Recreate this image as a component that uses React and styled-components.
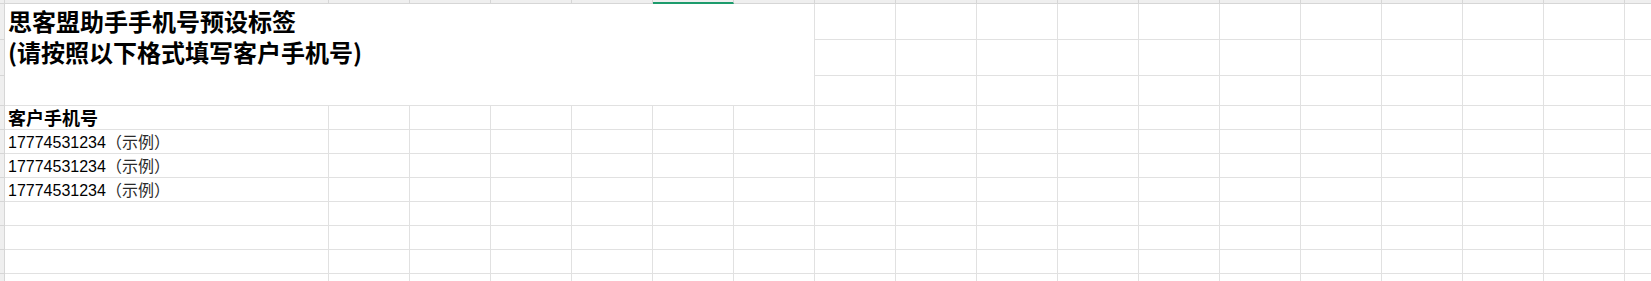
import React from "react";
import styled, { createGlobalStyle } from "styled-components";

const GlobalStyle = createGlobalStyle`
  html, body {
    margin: 0;
    padding: 0;
    background: #ffffff;
    overflow: hidden;
  }
  body {
    font-family: "Liberation Sans", "Noto Sans CJK SC", sans-serif;
  }
`;

const COL_A = 324;
const COL_W = 81;
const EXTRA_COLS = 17;
const ROW_HEIGHTS = [36, 36, 30, 24, 24, 24, 24, 24, 24, 24, 24];
const SELECTED_COL = 5; // column F

const Sheet = styled.div`
  width: 1651px;
  height: 281px;
  overflow: hidden;
  display: grid;
  grid-template-columns: 5px ${COL_A}px repeat(${EXTRA_COLS}, ${COL_W}px);
  grid-template-rows: 4px ${ROW_HEIGHTS.map((h) => `${h}px`).join(" ")};
  background: #ffffff;
`;

const Corner = styled.div`
  box-sizing: border-box;
  background: #efefef;
  border-right: 1px solid #d6d6d6;
  border-bottom: 1px solid #d6d6d6;
`;

const ColHeader = styled.div`
  box-sizing: border-box;
  background: #efefef;
  border-right: 1px solid #d6d6d6;
  border-bottom: ${(p) => (p.$selected ? "2px solid #1d9b6c" : "1px solid #d6d6d6")};
`;

const RowHeader = styled.div`
  box-sizing: border-box;
  background: #efefef;
  border-right: 1px solid #d6d6d6;
  border-bottom: 1px solid #d6d6d6;
`;

const Cell = styled.div`
  box-sizing: border-box;
  border-right: 1px solid #e1e1e1;
  border-bottom: 1px solid #e1e1e1;
  padding: 0 3px;
  white-space: nowrap;
  overflow: visible;
  font-size: 16px;
  line-height: ${(p) => p.$line || 23}px;
  color: #000000;
  font-weight: ${(p) => (p.$bold ? 700 : 400)};
  font-family: ${(p) =>
    p.$bold
      ? `"Noto Sans CJK SC", sans-serif`
      : `"Liberation Sans", "Noto Sans CJK SC", sans-serif`};
  ${(p) => (p.$size ? `font-size: ${p.$size}px;` : "")}
`;

const MergedTitle = styled.div`
  box-sizing: border-box;
  grid-column: 2 / 9;
  grid-row: 2 / 5;
  border-right: 1px solid #e1e1e1;
  border-bottom: 1px solid #e1e1e1;
  padding: 1px 3px 0;
  font-family: "Noto Sans CJK SC", sans-serif;
  font-weight: 700;
  font-size: 24px;
  line-height: 31px;
  color: #000000;
  white-space: nowrap;
`;

const TitleLine = styled.div``;

const Note = styled.span`
  font-family: "Noto Sans CJK SC", sans-serif;
  color: #2b2b2b;
`;

const Phone = ({ value }) => (
  <>
    {value}
    <Note>（示例）</Note>
  </>
);

const cellContent = (r, c) => {
  if (c !== 0) return null;
  if (r === 3) return { text: "客户手机号", bold: true, size: 18 };
  if (r >= 4 && r <= 6) return { phone: "17774531234" };
  return null;
};

export default function App() {
  const totalCols = EXTRA_COLS + 1;
  const items = [];
  items.push(<Corner key="corner" />);
  for (let c = 0; c < totalCols; c++) {
    items.push(<ColHeader key={`h${c}`} $selected={c === SELECTED_COL} />);
  }
  ROW_HEIGHTS.forEach((h, r) => {
    items.push(<RowHeader key={`r${r}`} />);
    if (r === 0) items.push(<MergedTitle key="title">
      <TitleLine>思客盟助手手机号预设标签</TitleLine>
      <TitleLine>(请按照以下格式填写客户手机号)</TitleLine>
    </MergedTitle>);
    for (let c = 0; c < totalCols; c++) {
      if (r <= 2 && c <= 6) continue;
      const content = cellContent(r, c);
      items.push(
        <Cell
          key={`c${r}-${c}`}
          $bold={content && content.bold}
          $size={content && content.size}
          $line={h - 1}
        >
          {content && content.text}
          {content && content.phone && <Phone value={content.phone} />}
        </Cell>
      );
    }
  });

  return (
    <>
      <GlobalStyle />
      <Sheet>{items}</Sheet>
    </>
  );
}
